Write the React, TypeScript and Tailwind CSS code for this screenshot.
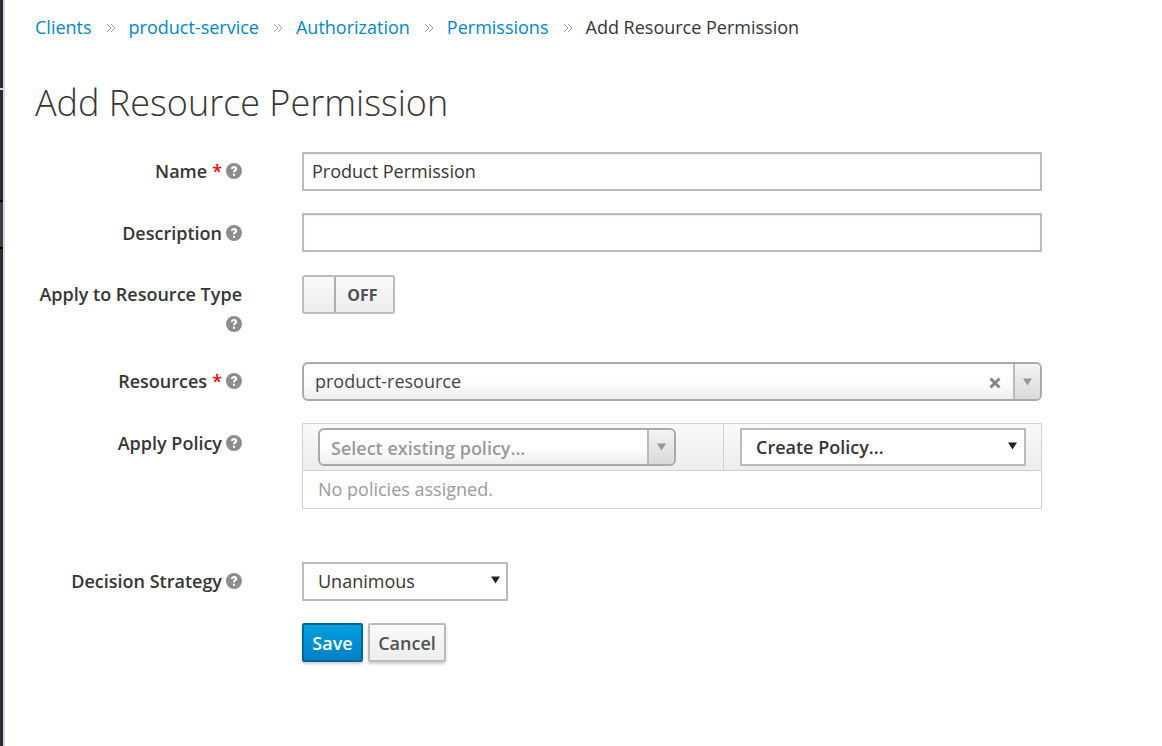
import React from 'react';

const font = "font-['Open_Sans',sans-serif]";

const HelpIcon = () => (
  <svg viewBox="0 0 16 16" className="w-[16px] h-[16px] shrink-0">
    <circle cx="8" cy="8" r="8" fill="#8b8d8f" />
    <path d="M4.9 6.1c.1-1.9 1.4-3 3.2-3 1.8 0 3.1 1 3.1 2.6 0 1.2-.6 1.8-1.4 2.3-.6.4-.8.6-.8 1.3H7c0-1.2.3-1.8 1-2.3.6-.4.9-.7.9-1.2 0-.5-.4-.8-.9-.8-.6 0-1 .4-1 1.1H4.9z" fill="#fff" />
    <rect x="7" y="10.7" width="2.1" height="2.1" fill="#fff" />
  </svg>
);

const Label = ({ text, required, className = '' }: { text: string; required?: boolean; className?: string }) => (
  <div className={`w-[207px] flex justify-end items-center gap-[4px] font-semibold text-[#363636] text-[18px] leading-[24px] whitespace-nowrap ${className}`}>
    <span>{text}</span>
    {required && <span className="text-[#ff0000] ml-[1px]">*</span>}
    <HelpIcon />
  </div>
);

const Caret = ({ className }: { className: string }) => (
  <svg viewBox="0 0 10 8" className={className}>
    <path d="M0 0h10L5 8z" fill="currentColor" />
  </svg>
);

const Chevrons = () => (
  <svg viewBox="0 0 10 10" className="w-[10px] h-[10px] ml-[14px] mr-[13px] mt-[2px] text-[#9c9c9c]" fill="none" stroke="currentColor" strokeWidth="1">
    <path d="M1 1l4 4-4 4M5 1l4 4-4 4" />
  </svg>
);

const crumbs = ['Clients', 'product-service', 'Authorization', 'Permissions'];

const inputCls = 'w-[740px] h-[39px] border-2 border-[#bbb] bg-white shadow-[inset_0_1px_1px_rgba(3,3,3,0.08)] text-[18px] text-[#363636] pl-[8px] flex items-center';

export default function App() {
  return (
    <div className={`w-[1162px] h-[746px] overflow-hidden bg-white flex ${font}`}>
      {/* edge of the sidebar behind the page */}
      <div className="w-[3px] shrink-0 flex flex-col bg-[#292e34]">
        <div className="h-[88px]" />
        <div className="h-[2px] bg-[#d8d8d8]" />
        <div className="h-[110px]" />
        <div className="h-[2px] bg-[#030303]" />
        <div className="h-[45px] bg-[#393f44]" />
        <div className="h-[2px] bg-[#030303]" />
      </div>
      <div className="w-[2px] bg-[#d8d8d8] shrink-0" />
      <div className="flex-1 pl-[30px]">
        <div className="flex items-center h-[24px] mt-[15px] text-[18px] leading-[24px] whitespace-nowrap">
          {crumbs.map(c => (
            <React.Fragment key={c}>
              <span className="text-[#0088ce]">{c}</span>
              <Chevrons />
            </React.Fragment>
          ))}
          <span className="text-[#363636]">Add Resource Permission</span>
        </div>

        <h1 className="mt-[39px] text-[36px] leading-[50px] font-light text-[#363636] whitespace-nowrap">Add Resource Permission</h1>

        <div className="mt-[24px] flex flex-col">
          <div className="flex gap-[60px] items-center h-[39px]">
            <Label text="Name" required className="-mt-[2px]" />
            <div className={inputCls}>Product Permission</div>
          </div>

          <div className="flex gap-[60px] items-center h-[39px] mt-[22px]">
            <Label text="Description" />
            <div className={inputCls} />
          </div>

          <div className="flex gap-[60px] mt-[23px] h-[64px]">
            <div className="w-[207px] flex flex-col items-end font-semibold text-[#363636] text-[18px] leading-[24px] whitespace-nowrap">
              <span className="h-[38px] flex items-center">Apply to Resource Type</span>
              <div className="mt-[3px]"><HelpIcon /></div>
            </div>
            <div className="w-[93px] h-[39px] border-2 border-[#bbb] rounded-[3px] flex font-bold text-[16px] text-[#4d5258]">
              <div className="w-[32px] border-r-2 border-[#b0b0b0] bg-gradient-to-b from-[#fafafa] to-[#ededed]" />
              <div className="flex-1 flex items-center justify-center pr-[4px] bg-gradient-to-b from-[#fafafa] to-[#ededed]">OFF</div>
            </div>
          </div>

          <div className="flex gap-[60px] items-center h-[39px] mt-[23px]">
            <Label text="Resources" required className="-mt-[2px]" />
            <div className="w-[740px] h-[39px] border-2 border-[#aaa] rounded-[6px] bg-gradient-to-b from-white from-50% to-[#eeeeee] flex items-center text-[18px] text-[#444] pl-[11px] overflow-hidden">
              <span className="flex-1">product-resource</span>
              <svg viewBox="0 0 12 12" className="w-[12px] h-[12px] mr-[12px] mt-[2px] text-[#888]" stroke="currentColor" strokeWidth="3">
                <path d="M1.5 1.5l9 9M10.5 1.5l-9 9" />
              </svg>
              <div className="w-[27px] h-full border-l-2 border-[#bbb] bg-gradient-to-b from-[#f4f4f4] to-[#d9d9d9] flex items-center justify-center">
                <Caret className="w-[9px] h-[8px] text-[#999]" />
              </div>
            </div>
          </div>

          <div className="flex gap-[60px] mt-[22px]">
            <div className="h-[40px] flex items-center">
              <Label text="Apply Policy" />
            </div>
            <div className="w-[740px] border border-[#d1d1d1]">
              <div className="h-[47px] flex bg-gradient-to-b from-[#fafafa] to-[#ededed] border-b border-[#d1d1d1]">
                <div className="w-[421px] border-r border-[#d1d1d1] pl-[15px] pt-[4px]">
                  <div className="w-[358px] h-[38px] border-2 border-[#aaa] rounded-[6px] bg-gradient-to-b from-white from-50% to-[#eeeeee] flex items-center text-[18px] font-semibold text-[#999] pl-[11px] overflow-hidden">
                    <span className="flex-1 pt-[2px]">Select existing policy...</span>
                    <div className="w-[27px] h-full border-l-2 border-[#bbb] bg-gradient-to-b from-[#f4f4f4] to-[#d9d9d9] flex items-center justify-center">
                      <Caret className="w-[9px] h-[8px] text-[#999]" />
                    </div>
                  </div>
                </div>
                <div className="pl-[16px] pt-[4px]">
                  <div className="w-[286px] h-[38px] border-2 border-[#bbb] bg-white flex items-center text-[18px] text-[#363636] pl-[14px] font-semibold">
                    <span className="flex-1">Create Policy...</span>
                    <Caret className="w-[9px] h-[8px] mr-[7px] -mt-[3px] text-[#222]" />
                  </div>
                </div>
              </div>
              <div className="h-[37px] flex items-center pl-[15px] text-[18px] text-[#9c9c9c]">No policies assigned.</div>
            </div>
          </div>

          <div className="flex gap-[60px] items-center h-[39px] mt-[53px]">
            <Label text="Decision Strategy" className="-mt-[2px]" />
            <div className="w-[206px] h-[39px] border-2 border-[#bbb] bg-white flex items-center text-[18px] text-[#363636] pl-[14px]">
              <span className="flex-1">Unanimous</span>
              <Caret className="w-[9px] h-[8px] mr-[6px] -mt-[3px] text-[#222]" />
            </div>
          </div>

          <div className="flex gap-[5px] mt-[22px] ml-[267px]">
            <div className="w-[61px] h-[39px] pt-[1px] border-2 border-[#00659c] rounded-[2px] bg-gradient-to-b from-[#00a0df] to-[#0080c4] text-white font-semibold text-[18px] flex items-center justify-center shadow-[0_2px_3px_rgba(3,3,3,0.2)]">Save</div>
            <div className="w-[78px] h-[39px] pt-[1px] border-2 border-[#bbb] rounded-[2px] bg-gradient-to-b from-[#fafafa] to-[#ededed] text-[#4d5258] font-semibold text-[18px] flex items-center justify-center shadow-[0_2px_3px_rgba(3,3,3,0.2)]">Cancel</div>
          </div>
        </div>
      </div>
    </div>
  );
}
